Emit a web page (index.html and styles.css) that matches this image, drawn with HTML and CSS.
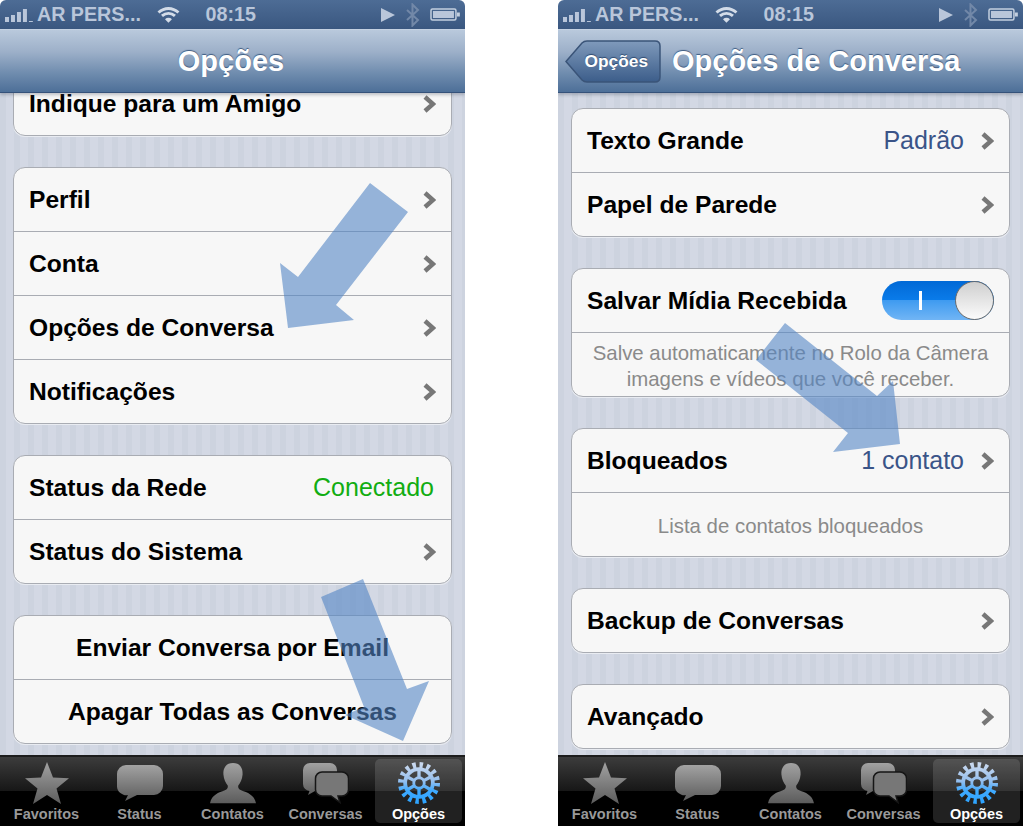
FILE: index.html
```html
<!DOCTYPE html>
<html lang="en">

<head>
    <meta charset="UTF-8">
    <title>Opções</title>
    <link rel="stylesheet" href="styles.css">
</head>

<body>
    <!-- shared icons -->
    <svg class="defs" width="0" height="0">
        <defs>
            <linearGradient id="tabGrey" x1="0" y1="0" x2="0" y2="1">
                <stop offset="0" stop-color="#a2a2a2" />
                <stop offset="1" stop-color="#5c5c5c" />
            </linearGradient>
            <linearGradient id="gearBlue" gradientUnits="userSpaceOnUse" x1="0" y1="2" x2="0" y2="42">
                <stop offset="0" stop-color="#c9d8ee" />
                <stop offset="0.45" stop-color="#95bfee" />
                <stop offset="0.7" stop-color="#3faaff" />
                <stop offset="1" stop-color="#2ea4ff" />
            </linearGradient>
            <symbol id="chevron" viewBox="0 0 13 18">
                <path d="M2 2l8 7-8 7" fill="none" stroke="#777" stroke-width="4.500" />
            </symbol>
            <symbol id="signal" viewBox="0 0 28 13">
                <path d="M0 8h4v5H0zM6 6h4v7H6zM12 3h4v10h-4zM18 0h4v13h-4zM24 12h4v1h-4z" fill="#b9c6da" />
            </symbol>
            <symbol id="wifi" viewBox="0 0 23 17">
                <path d="M1.500 6.500c6-5.500 14-5.500 20 0M5 10c4-3.500 9-3.500 13 0" fill="none" stroke="#d3dce8" stroke-width="3" />
                <path d="M8 13.200c2-1.800 5-1.800 7 0l-3.500 3.500z" fill="#d3dce8" />
            </symbol>
            <symbol id="bluetooth" viewBox="0 0 14 24">
                <path d="M1 7l11 10-5.500 5.500v-21L12 7 1 17" fill="none" stroke="#7288a8" stroke-width="2" />
            </symbol>
            <symbol id="battery" viewBox="0 0 30 13">
                <rect x="1" y="1" width="25" height="11" rx="1.500" fill="none" stroke="#c3cfdf" stroke-width="1.500" />
                <rect x="3" y="3" width="21" height="7" fill="#b9c6da" />
                <rect x="27" y="4.500" width="3" height="4" fill="#c3cfdf" />
            </symbol>
            <symbol id="star" viewBox="0 0 44 42">
                <path d="M22 0l6 15.500 16 .8-12.500 10.300L36 42 22 33 8 42l4.500-15.400L0 16.300l16-.8z" fill="url(#tabGrey)" />
            </symbol>
            <symbol id="bubble" viewBox="0 0 46 36">
                <path d="M9 0h28a9 9 0 0 1 9 9v12a9 9 0 0 1-9 9H20L8 36l3-6.100A9 9 0 0 1 0 21V9a9 9 0 0 1 9-9z" fill="url(#tabGrey)" />
            </symbol>
            <symbol id="person" viewBox="0 0 48 42">
                <path d="M24 0c7 0 10.500 5 10 12-.4 5-2.500 9-4.500 11.500-.6 2 .5 4 3 5C39 31 46 33 48 42H0c2-9 9-11 15.500-13.500 2.500-1 3.600-3 3-5C16.500 21 14.400 17 14 12 13.500 5 17 0 24 0z" fill="url(#tabGrey)" />
            </symbol>
            <symbol id="chats" viewBox="0 0 46 40">
                <path d="M7 0h20a7 7 0 0 1 7 7v14a7 7 0 0 1-7 7H12l-7 4 1.500-4.100A7 7 0 0 1 0 21V7a7 7 0 0 1 7-7z" fill="url(#tabGrey)" />
                <path d="M19 9h20a6.500 6.500 0 0 1 6.500 6.500v11A6.500 6.500 0 0 1 39 33h-4l2 6.500-9-6.500h-9a6.500 6.500 0 0 1-6.500-6.500v-11A6.500 6.500 0 0 1 19 9z" fill="#777" stroke="#161616" stroke-width="1.500" />
            </symbol>
            <symbol id="gear" viewBox="0 0 44 44">
                <g fill="none" stroke="url(#gearBlue)">
                    <circle cx="22" cy="22" r="18" stroke-width="8" stroke-dasharray="3.400 3.670" />
                    <circle cx="22" cy="22" r="14.500" stroke-width="4" />
                    <circle cx="22" cy="22" r="5.500" stroke-width="3" />
                    <path d="M22 16.500V9M17.200 24.800l-6.500 3.700M26.800 24.800l6.500 3.700M17 19.500l-6.500-3.500M27 19.500l6.500-3.500M22 27.500V35" stroke-width="3.500" />
                </g>
            </symbol>
        </defs>
    </svg>

    <div class="screens">
        <div class="phone">
            <div class="status-bar">
                <svg class="ic-signal"><use href="#signal" /></svg>
                <span class="carrier">AR PERS...</span>
                <svg class="ic-wifi"><use href="#wifi" /></svg>
                <span class="clock">08:15</span>
                <span class="play"></span>
                <svg class="ic-bt"><use href="#bluetooth" /></svg>
                <svg class="ic-battery"><use href="#battery" /></svg>
            </div>
            <div class="nav-bar nav-center">
                <span class="nav-title">Opções</span>
            </div>
            <div class="content">
                <div class="group group-scrolled">
                    <div class="row"><span class="label">Indique para um Amigo</span><svg class="chevron"><use href="#chevron" /></svg></div>
                </div>
                <div class="group">
                    <div class="row"><span class="label">Perfil</span><svg class="chevron"><use href="#chevron" /></svg></div>
                    <div class="row"><span class="label">Conta</span><svg class="chevron"><use href="#chevron" /></svg></div>
                    <div class="row"><span class="label">Opções de Conversa</span><svg class="chevron"><use href="#chevron" /></svg></div>
                    <div class="row"><span class="label">Notificações</span><svg class="chevron"><use href="#chevron" /></svg></div>
                </div>
                <div class="group">
                    <div class="row"><span class="label">Status da Rede</span><span class="value value-green">Conectado</span></div>
                    <div class="row"><span class="label">Status do Sistema</span><svg class="chevron"><use href="#chevron" /></svg></div>
                </div>
                <div class="group">
                    <div class="row row-center"><span class="label">Enviar Conversa por Email</span></div>
                    <div class="row row-center"><span class="label">Apagar Todas as Conversas</span></div>
                </div>
            </div>
            <div class="tab-bar">
                <div class="tab"><svg class="tab-icon"><use href="#star" /></svg><span>Favoritos</span></div>
                <div class="tab"><svg class="tab-icon"><use href="#bubble" /></svg><span>Status</span></div>
                <div class="tab"><svg class="tab-icon"><use href="#person" /></svg><span>Contatos</span></div>
                <div class="tab"><svg class="tab-icon"><use href="#chats" /></svg><span>Conversas</span></div>
                <div class="tab tab-active"><svg class="tab-icon"><use href="#gear" /></svg><span>Opções</span></div>
            </div>
            <svg class="arrows" viewBox="0 0 465 826">
                <path d="M370 183L408 212 336 305 354 320 288 328 280 263 298 277z" />
                <path d="M321 597L363 579 407 689 429 681 403 741 345 715 364 707z" />
            </svg>
        </div>

        <div class="phone">
            <div class="status-bar">
                <svg class="ic-signal"><use href="#signal" /></svg>
                <span class="carrier">AR PERS...</span>
                <svg class="ic-wifi"><use href="#wifi" /></svg>
                <span class="clock">08:15</span>
                <span class="play"></span>
                <svg class="ic-bt"><use href="#bluetooth" /></svg>
                <svg class="ic-battery"><use href="#battery" /></svg>
            </div>
            <div class="nav-bar">
                <div class="back-btn">
                    <svg class="back-shape" viewBox="0 0 96 43">
                        <defs>
                            <linearGradient id="backFill" x1="0" y1="0" x2="0" y2="1">
                                <stop offset="0" stop-color="#7f9abb" />
                                <stop offset="1" stop-color="#3c5d8a" />
                            </linearGradient>
                        </defs>
                        <path d="M1 21.500L17 3Q19 1 22 1h68q5 0 5 5v31q0 5-5 5H22q-3 0-5-2z" fill="url(#backFill)" stroke="#3a5478" stroke-width="1.500" />
                    </svg>
                    <span>Opções</span>
                </div>
                <span class="nav-title">Opções de Conversa</span>
            </div>
            <div class="content content-top">
                <div class="group">
                    <div class="row"><span class="label">Texto Grande</span><span class="value">Padrão</span><svg class="chevron"><use href="#chevron" /></svg></div>
                    <div class="row"><span class="label">Papel de Parede</span><svg class="chevron"><use href="#chevron" /></svg></div>
                </div>
                <div class="group">
                    <div class="row"><span class="label">Salvar Mídia Recebida</span>
                        <div class="switch"><span class="switch-mark"></span><span class="switch-thumb"></span></div>
                    </div>
                    <div class="row row-note"><span class="note">Salve automaticamente no Rolo da Câmera<br>imagens e vídeos que você receber.</span></div>
                </div>
                <div class="group">
                    <div class="row"><span class="label">Bloqueados</span><span class="value">1 contato</span><svg class="chevron"><use href="#chevron" /></svg></div>
                    <div class="row row-note"><span class="note">Lista de contatos bloqueados</span></div>
                </div>
                <div class="group">
                    <div class="row"><span class="label">Backup de Conversas</span><svg class="chevron"><use href="#chevron" /></svg></div>
                </div>
                <div class="group">
                    <div class="row"><span class="label">Avançado</span><svg class="chevron"><use href="#chevron" /></svg></div>
                </div>
            </div>
            <div class="tab-bar">
                <div class="tab"><svg class="tab-icon"><use href="#star" /></svg><span>Favoritos</span></div>
                <div class="tab"><svg class="tab-icon"><use href="#bubble" /></svg><span>Status</span></div>
                <div class="tab"><svg class="tab-icon"><use href="#person" /></svg><span>Contatos</span></div>
                <div class="tab"><svg class="tab-icon"><use href="#chats" /></svg><span>Conversas</span></div>
                <div class="tab tab-active"><svg class="tab-icon"><use href="#gear" /></svg><span>Opções</span></div>
            </div>
            <svg class="arrows" viewBox="0 0 465 826">
                <path d="M227 323L319 396 335 381 342 444 275 452 290 433 198 360z" />
            </svg>
        </div>
    </div>
</body>

</html>
```

FILE: styles.css
```css
body {
    margin: 0;
    background-color: #ffffff;
    font-family: "Liberation Sans", Arial, sans-serif;
}

.defs {
    position: absolute;
}

.screens {
    display: flex;
    gap: 93px;
    width: 1023px;
    height: 826px;
    overflow: hidden;
}

.phone {
    position: relative;
    display: flex;
    flex-direction: column;
    width: 465px;
    height: 826px;
    border-radius: 6px 6px 0 0;
    overflow: hidden;
}

/* status bar */
.status-bar {
    display: flex;
    align-items: center;
    flex-shrink: 0;
    height: 29px;
    padding: 0 5px;
    box-sizing: border-box;
    background: linear-gradient(#4d6c95, #3a5780);
    color: #b9c6da;
    font-size: 19.7px;
    font-weight: bold;
}

.ic-signal {
    width: 28px;
    height: 13px;
    margin-top: 2px;
}

.carrier {
    width: 119px;
    margin-left: 4px;
    white-space: nowrap;
}

.ic-wifi {
    width: 23px;
    height: 17px;
    margin-left: 1px;
    margin-right: 26px;
}

.clock {
    width: 176px;
}

.play {
    width: 0;
    height: 0;
    border-left: 14px solid #b9c6da;
    border-top: 7px solid transparent;
    border-bottom: 7px solid transparent;
    margin-right: 11px;
}

.ic-bt {
    width: 14px;
    height: 24px;
    margin-right: 10px;
}

.ic-battery {
    width: 30px;
    height: 13px;
}

/* nav bar */
.nav-bar {
    display: flex;
    align-items: center;
    flex-shrink: 0;
    height: 64px;
    padding-left: 7px;
    box-sizing: border-box;
    border-top: 1px solid #c4d1e2;
    border-bottom: 1px solid #35527a;
    background: linear-gradient(#b9c9dc, #9db0c9 35%, #6f8cae 70%, #4d6f98);
    box-shadow: 0 2px 3px rgba(60, 70, 90, 0.3);
    z-index: 1;
}

.nav-center {
    justify-content: center;
    padding-left: 0;
    padding-right: 3px;
}

.nav-title {
    color: #ffffff;
    font-size: 29px;
    font-weight: bold;
    text-shadow: 0 -1px 1px #3d5a80;
}

.back-btn {
    position: relative;
    display: flex;
    align-items: center;
    justify-content: flex-end;
    width: 96px;
    height: 43px;
    margin-right: 11px;
    padding-right: 13px;
    box-sizing: border-box;
    color: #ffffff;
    font-size: 17.3px;
    font-weight: bold;
    text-shadow: 0 -1px 1px #2e4a70;
}

.back-btn span {
    position: relative;
}

.back-shape {
    position: absolute;
    left: 0;
    top: 0;
    width: 96px;
    height: 43px;
}

/* grouped table */
.content {
    flex: 1;
    min-height: 0;
    display: flex;
    flex-direction: column;
    gap: 31px;
    padding: 0 13px;
    overflow: hidden;
    background: repeating-linear-gradient(90deg, #cdd3df 0 6px, #d3d8e4 6px 14px);
}

.content-top {
    padding-top: 15px;
}

.group {
    flex-shrink: 0;
    border: 1px solid #a9acb3;
    border-radius: 12px;
    background-color: #f7f7f7;
    box-shadow: 0 1px 0 #e9ecf2;
}

.group-scrolled {
    margin-top: -22px;
}

.row {
    display: flex;
    align-items: center;
    height: 64px;
    padding: 0 15px;
    box-sizing: border-box;
    border-bottom: 1px solid #a9acb3;
}

.row:last-child {
    height: 63px;
    border-bottom: none;
}

.row-center,
.row-note {
    justify-content: center;
    text-align: center;
}

.row-note {
    padding-top: 2px;
}

.label {
    flex: 1;
    color: #000000;
    font-size: 24.6px;
    font-weight: bold;
    white-space: nowrap;
}

.row-center .label {
    flex: none;
}

.value {
    margin-right: 17px;
    color: #3a5488;
    font-size: 25px;
}

.value-green {
    margin-right: 2px;
    color: #12ad12;
}

.chevron {
    width: 13px;
    height: 18px;
    flex-shrink: 0;
}

.note {
    color: #8a8a8a;
    font-size: 20.4px;
    line-height: 26px;
}

/* on/off switch */
.switch {
    position: relative;
    flex-shrink: 0;
    width: 112px;
    height: 39px;
    box-sizing: border-box;
    border-radius: 20px;
    background: linear-gradient(#0169d6 0, #0a7cea 50%, #3f9bf0 50%, #71b5f5);
}

.switch-mark {
    position: absolute;
    left: 37px;
    top: 10px;
    width: 3px;
    height: 19px;
    background-color: #ffffff;
}

.switch-thumb {
    position: absolute;
    right: 0;
    top: 0;
    width: 39px;
    height: 39px;
    box-sizing: border-box;
    border: 1px solid #6c6c6c;
    border-radius: 50%;
    background: linear-gradient(#cfcfcf, #fbfbfb);
}

/* tab bar */
.tab-bar {
    display: grid;
    grid-template-columns: repeat(5, 93px);
    flex-shrink: 0;
    height: 71px;
    box-sizing: border-box;
    border-top: 2px solid #1d1d1d;
    background: linear-gradient(#3c3c3c, #161616 50%, #000000 50%);
    z-index: 1;
}

.tab {
    display: flex;
    flex-direction: column;
    align-items: center;
    justify-content: flex-end;
    margin: 2px 3px 3px;
    padding-bottom: 1px;
    border-radius: 5px;
    color: #999999;
    font-size: 14.5px;
    font-weight: bold;
    white-space: nowrap;
}

.tab-icon {
    width: 46px;
    height: 42px;
    margin-bottom: 2px;
}

.tab-active {
    background-color: rgba(255, 255, 255, 0.13);
    color: #ffffff;
}

/* hand-drawn arrows on top of the screenshots */
.arrows {
    position: absolute;
    left: 0;
    top: 0;
    width: 465px;
    height: 826px;
    z-index: 2;
    pointer-events: none;
}

.arrows path {
    fill: rgba(83, 133, 197, 0.6);
}
```
